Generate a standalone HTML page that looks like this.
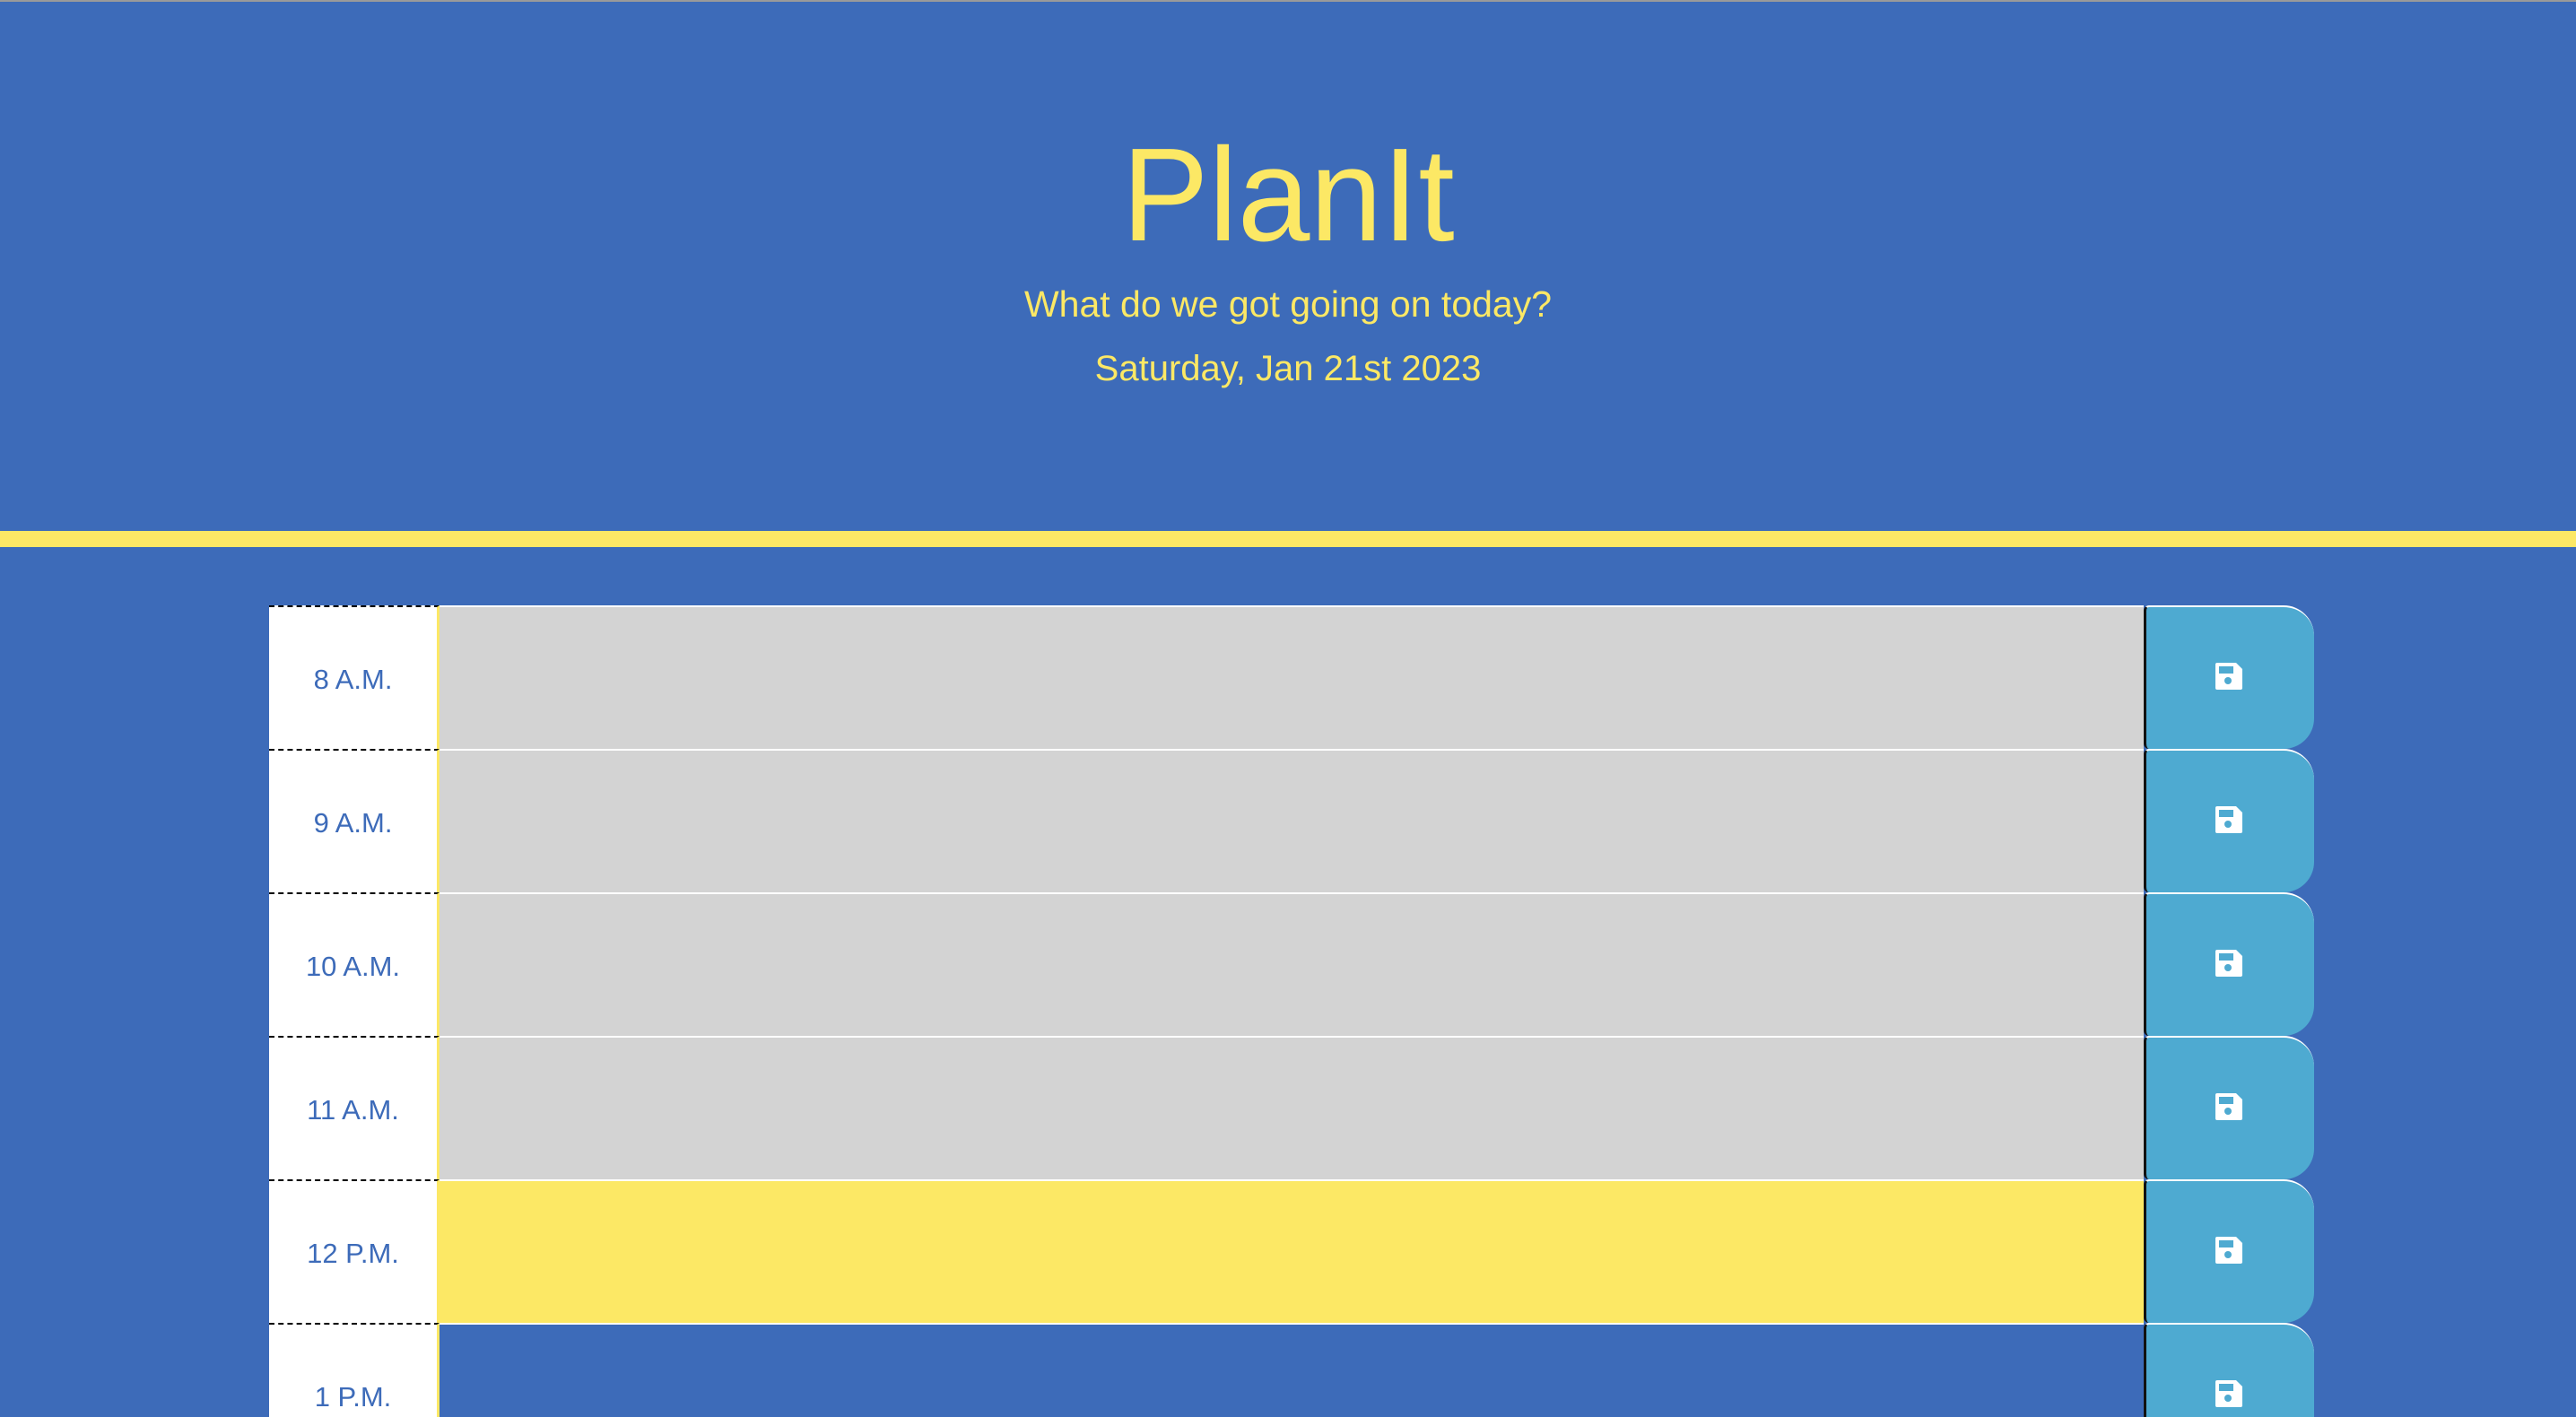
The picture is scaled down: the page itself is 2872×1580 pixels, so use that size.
<!DOCTYPE html>
<html style="width:2872px;height:1580px;overflow:hidden"><head><style>
html,body{margin:0;padding:0}
body{width:2872px;height:1580px;background:#3d6bb9;position:relative;overflow:hidden;font-family:"Liberation Sans",sans-serif}
.topline{position:absolute;left:0;top:0;width:2872px;height:2px;background:#9a9a9a}
.t{position:absolute;left:0;width:2872px;text-align:center;color:#fce865;white-space:nowrap}
.t span{display:inline-block}
.stripe{position:absolute;left:0;top:592px;width:2872px;height:18px;background:#fce865}
.row{position:absolute;left:300px;width:2280px;height:160px}
.hour{position:absolute;left:0;top:0;width:190px;height:160px;background:#fff;border-top:2px dashed #000;box-sizing:border-box;color:#3d6bb9;font-size:31px;line-height:162px;text-align:center;border-right:3px solid #fce865}
.ta{position:absolute;left:190px;top:0;width:1900px;height:160px;border-top:2px solid #fff;box-sizing:border-box}
.btn{position:absolute;left:2090px;top:0;width:190px;height:160px;background:#4eaad1;border-top:2px solid #fff;border-left:3px solid #111;border-radius:6px 34px 34px 6px;box-sizing:border-box}
.btn svg{position:absolute;left:77px;top:62px}
</style></head><body>
<div class="topline"></div>
<div class="t" style="top:133px;font-size:148px;line-height:170px"><span style="transform:scaleX(0.98)">PlanIt</span></div>
<div class="t" style="top:314px;font-size:41px;line-height:50px"><span>What do we got going on today?</span></div>
<div class="t" style="top:386px;font-size:40px;line-height:50px"><span>Saturday, Jan 21st 2023</span></div>
<div class="stripe"></div>

<div class="row" style="top:675px"><div class="hour">8 A.M.</div><div class="ta" style="background:#d3d3d3"></div><div class="btn"><svg width="30" height="30" viewBox="0 0 30 30"><path d="M2 0H23L30 7V28Q30 30 28 30H2Q0 30 0 28V2Q0 0 2 0Z" fill="#fff"/><rect x="4" y="4" width="16" height="8" fill="#4eaad1"/><circle cx="14" cy="20" r="4" fill="#4eaad1"/></svg></div></div>
<div class="row" style="top:835px"><div class="hour">9 A.M.</div><div class="ta" style="background:#d3d3d3"></div><div class="btn"><svg width="30" height="30" viewBox="0 0 30 30"><path d="M2 0H23L30 7V28Q30 30 28 30H2Q0 30 0 28V2Q0 0 2 0Z" fill="#fff"/><rect x="4" y="4" width="16" height="8" fill="#4eaad1"/><circle cx="14" cy="20" r="4" fill="#4eaad1"/></svg></div></div>
<div class="row" style="top:995px"><div class="hour">10 A.M.</div><div class="ta" style="background:#d3d3d3"></div><div class="btn"><svg width="30" height="30" viewBox="0 0 30 30"><path d="M2 0H23L30 7V28Q30 30 28 30H2Q0 30 0 28V2Q0 0 2 0Z" fill="#fff"/><rect x="4" y="4" width="16" height="8" fill="#4eaad1"/><circle cx="14" cy="20" r="4" fill="#4eaad1"/></svg></div></div>
<div class="row" style="top:1155px"><div class="hour">11 A.M.</div><div class="ta" style="background:#d3d3d3"></div><div class="btn"><svg width="30" height="30" viewBox="0 0 30 30"><path d="M2 0H23L30 7V28Q30 30 28 30H2Q0 30 0 28V2Q0 0 2 0Z" fill="#fff"/><rect x="4" y="4" width="16" height="8" fill="#4eaad1"/><circle cx="14" cy="20" r="4" fill="#4eaad1"/></svg></div></div>
<div class="row" style="top:1315px"><div class="hour">12 P.M.</div><div class="ta" style="background:#fce865"></div><div class="btn"><svg width="30" height="30" viewBox="0 0 30 30"><path d="M2 0H23L30 7V28Q30 30 28 30H2Q0 30 0 28V2Q0 0 2 0Z" fill="#fff"/><rect x="4" y="4" width="16" height="8" fill="#4eaad1"/><circle cx="14" cy="20" r="4" fill="#4eaad1"/></svg></div></div>
<div class="row" style="top:1475px;height:105px;overflow:hidden"><div class="hour">1 P.M.</div><div class="ta" style="background:#3d6bb9"></div><div class="btn"><svg width="30" height="30" viewBox="0 0 30 30"><path d="M2 0H23L30 7V28Q30 30 28 30H2Q0 30 0 28V2Q0 0 2 0Z" fill="#fff"/><rect x="4" y="4" width="16" height="8" fill="#4eaad1"/><circle cx="14" cy="20" r="4" fill="#4eaad1"/></svg></div></div>
</body></html>
